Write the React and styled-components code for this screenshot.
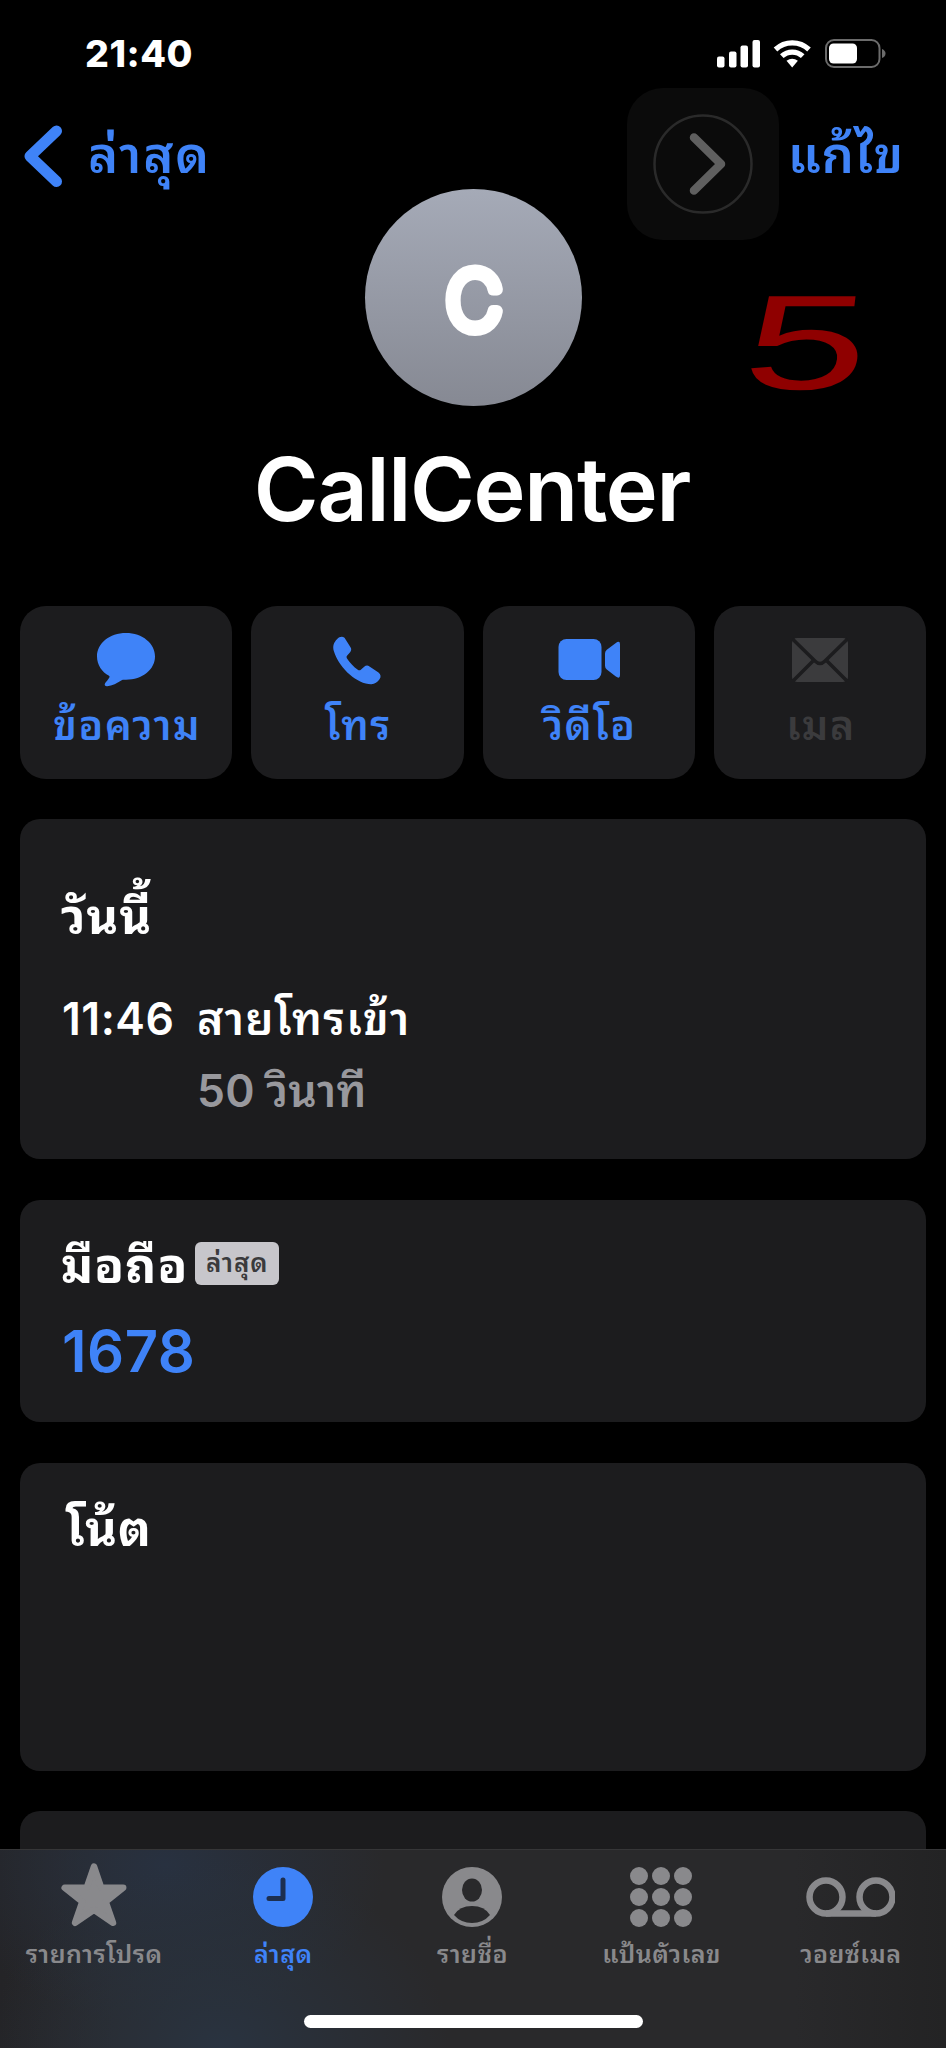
import React from "react";
import styled, {createGlobalStyle} from "styled-components";

const blue = '#3f83f8';
const card = '#1c1c1e';

const GlobalStyle = createGlobalStyle`
  * {
    box-sizing: border-box;
  }
  body {
    margin: 0;
    background: #000000;
    font-family: Inter, "Noto Sans Thai Looped", Loma, Garuda, "Noto Sans Thai", "Noto Sans", sans-serif;
    color: #FFFFFF;
  }
  svg {
    display: block;
    flex-shrink: 0;
  }
`;

const Screen = styled.div`
  position: relative;
  width: 946px;
  height: 2048px;
  overflow: hidden;
  display: flex;
  flex-direction: column;
  background: #000000;
  white-space: nowrap;
`;

const StatusBar = styled.div`
  height: 108px;
  padding: 0 60px 0 85px;
  display: flex;
  align-items: center;
  justify-content: space-between;
`;

const Time = styled.div`
  font-size: 37.5px;
  line-height: 44px;
  font-weight: 800;
  letter-spacing: .5px;
`;

const NavBar = styled.div`
  height: 81px;
  padding: 0 42px 0 24px;
  display: flex;
  justify-content: space-between;
`;

const BackLink = styled.div`
  display: flex;
  align-items: flex-start;
  padding-top: 17px;
`;

const NavText = styled.div`
  font-size: 51px;
  line-height: 60px;
  font-weight: 600;
  letter-spacing: ${props => props.$back ? '1.8px' : '.7px'};
  color: ${blue};
  margin-left: ${props => props.$back ? '25px' : '0'};
  padding-top: ${props => props.$back ? '0' : '17px'};
`;

const Profile = styled.div`
  display: flex;
  flex-direction: column;
  align-items: center;
  height: 417px;
`;

const Avatar = styled.div`
  width: 217px;
  height: 217px;
  border-radius: 50%;
  background: linear-gradient(#a5aab7, #868993);
`;

const Name = styled.div`
  margin: 29px 2px 0 0;
  font-size: 88px;
  line-height: 108px;
  font-weight: 600;
  letter-spacing: -1.3px;
`;

const Actions = styled.div`
  display: grid;
  grid-template-columns: repeat(4, 1fr);
  gap: 19px;
  margin: 0 20px;
`;

const Action = styled.div`
  height: 173px;
  border-radius: 26px;
  background: ${card};
  color: ${props => props.$disabled ? '#3b3b3d' : blue};
  display: flex;
  flex-direction: column;
  align-items: center;
  padding-top: 24px;
`;

const ActionLabel = styled.div`
  margin: 8px 0 0 2px;
  font-size: 41px;
  line-height: 50px;
  font-weight: 600;
  letter-spacing: 1.4px;
`;

const Card = styled.div`
  height: ${props => props.$height}px;
  margin: ${props => props.$gap}px 20px 0;
  padding: ${props => props.$top}px 41px 0;
  border-radius: 20px;
  background: ${card};
  flex-shrink: 0;
`;

const CardTitle = styled.div`
  margin-left: ${props => props.$indent || 0}px;
  font-size: 49px;
  line-height: 60px;
  font-weight: 700;
  letter-spacing: .8px;
`;

const CallRow = styled.div`
  display: grid;
  grid-template-columns: 135px auto;
  row-gap: 12px;
  margin: 42px 0 0 1px;
  font-size: 44.5px;
  line-height: 60px;
  font-weight: 600;
  letter-spacing: .5px;
`;

const CallType = styled.div`
  letter-spacing: 1.2px;
`;

const Duration = styled.div`
  grid-column: 2;
  color: #98989d;
  letter-spacing: .2px;
`;

const PhoneHead = styled.div`
  display: flex;
  align-items: center;
`;

const Badge = styled.div`
  width: 84px;
  height: 43px;
  margin: 0 0 6px 7px;
  border-radius: 6px;
  background: #c7c6cb;
  color: #3a3a3c;
  font-size: 26px;
  line-height: 41px;
  font-weight: 600;
  letter-spacing: .8px;
  text-align: center;
`;

const Phone = styled.div`
  margin: 20px 0 0 1px;
  font-size: 58px;
  line-height: 70px;
  font-weight: 600;
  letter-spacing: .5px;
  color: ${blue};
`;

const TabBar = styled.div`
  position: absolute;
  left: 0;
  right: 0;
  bottom: 0;
  height: 199px;
  border-top: 1px solid #363638;
  background:
    radial-gradient(ellipse 230px 190px at 220px 199px, #293340, transparent),
    radial-gradient(ellipse 220px 160px at 165px 15px, #283140, transparent),
    linear-gradient(90deg, #242427, #29292b 12%, #29292b 84%, #232324);
`;

const Tabs = styled.div`
  display: grid;
  grid-template-columns: repeat(5, 1fr);
  margin: 0 1px 0 -1px;
`;

const Tab = styled.div`
  display: flex;
  flex-direction: column;
  align-items: center;
  padding-top: 11px;
  color: ${props => props.$active ? blue : '#89898c'};
`;

const TabLabel = styled.div`
  margin: 4px 0 0 1px;
  font-size: 25px;
  line-height: 34px;
  font-weight: 600;
  letter-spacing: .5px;
`;

const HomeIndicator = styled.div`
  width: 339px;
  height: 13px;
  border-radius: 7px;
  background: #FFFFFF;
  margin: 44px auto 0;
`;

// AssistiveTouch button floating over the page
const Assistive = styled.div`
  position: absolute;
  left: 627px;
  top: 88px;
  width: 152px;
  height: 152px;
  border-radius: 36px;
  background: #0b0b0b;
`;

// step number written over the page
const StepMark = styled.div`
  position: absolute;
  left: 754px;
  top: 268px;
  font-family: "Liberation Sans", sans-serif;
  font-size: 135px;
  line-height: 150px;
  color: #8f0000;
  transform: scaleX(1.64) skewX(-4deg);
  transform-origin: 0 0;
`;

const StatusIcons = () => (
  <svg width="170" height="30" viewBox="0 0 170 30" fill="#fff">
    <rect x="1" y="17.500" width="7.500" height="11" rx="2"/>
    <rect x="13" y="12.500" width="7.500" height="16" rx="2"/>
    <rect x="24.500" y="6.500" width="7.500" height="22" rx="2"/>
    <rect x="36.500" y="1" width="7.500" height="27.500" rx="2"/>
    <g fill="none" stroke="#fff" strokeWidth="5.200">
      <path d="M59.500 10.500a24.300 24.300 0 0 1 33.500 0"/>
      <path d="M65.800 17.200a15.200 15.200 0 0 1 20.900 0"/>
    </g>
    <path d="M70.500 21.800q5.700-4.200 11.400 0L76.200 28.500z"/>
    <rect x="110" y="1" width="53.500" height="27" rx="8" fill="none" stroke="#6b6b6b" strokeWidth="2"/>
    <rect x="113" y="4.500" width="28" height="20" rx="4.500"/>
    <path d="M166 10q3.500 1.500 3.500 4.500T166 19z" fill="#6b6b6b"/>
  </svg>
);

const BackIcon = () => (
  <svg width="39" height="63" viewBox="0 0 39 63" fill="none" stroke={blue} strokeWidth="11" strokeLinecap="round" strokeLinejoin="round">
    <path d="M32.500 6L6 31.200l26.500 25.300"/>
  </svg>
);

const Monogram = () => (
  <svg width="217" height="217" viewBox="0 0 217 217">
    <text x="81" y="140" fontSize="79" fontWeight="200" textLength="56" lengthAdjust="spacingAndGlyphs" fill="#fff" stroke="#fff" strokeWidth="12" strokeLinejoin="round">C</text>
  </svg>
);

const MessageIcon = () => (
  <svg width="62" height="62" viewBox="0 0 62 62" fill="currentColor">
    <path d="M31 3C14.500 3 2 13.200 2 26.500c0 8.500 5 15.500 12 19.300.8.500.6 1.200.2 1.900-1 1.800-2.700 3.600-4 5.200-1.200 1.600-.2 3.500 2 3.300 5-.6 10-3 14.500-6 1-.7 2.500-.5 4.300-.5C47.500 49.700 60 39.500 60 26.500S47.500 3 31 3z"/>
  </svg>
);

const CallIcon = () => (
  <svg width="62" height="62" viewBox="1 0 62 62" fill="currentColor">
    <path d="M19.500 7.700c-2.400-1.600-5.300-.8-7.300 1.200-3.500 3.400-4.800 7.300-3.300 12.300C11.500 30 18 38.500 25 44.800c6 5.300 14.500 9.600 21.300 9.500 3.500-.1 6.200-2.300 8.200-5 1.800-2.500 1.300-5.100-1-6.900l-9-6c-2-1.300-3.700-1-5.300.4l-3.400 2.900c-1 .8-2 .7-3 0-4-2.800-8.300-7.500-10.800-11.300-.6-1-.6-1.900.2-2.800l2.900-3.300c1.300-1.600 1.500-3.200.4-5z"/>
  </svg>
);

const VideoIcon = () => (
  <svg width="62" height="62" viewBox="-.5 0 62 62" fill="currentColor">
    <rect x="0" y="9" width="43" height="41" rx="8"/>
    <path d="M46.500 23.500q0-2.200 1.800-3.700L57 13.200q4.500-3.200 4.500 1v31q0 4.300-4.500 1l-8.700-6.800q-1.800-1.400-1.800-3.700z"/>
  </svg>
);

const MailIcon = () => (
  <svg width="62" height="62" viewBox="0 0 62 62">
    <rect x="3" y="8" width="56" height="44" rx="5" fill="currentColor"/>
    <g fill="none" stroke={card} strokeWidth="3.500">
      <path d="M3.500 9L26 31q5 5 10 0L58.500 9"/>
      <path d="M4 51l20-20M58 51L38 31"/>
    </g>
  </svg>
);

const StarIcon = () => (
  <svg width="72" height="72" viewBox="0 0 72 72" fill="currentColor" stroke="currentColor" strokeWidth="6.500" strokeLinejoin="round">
    <path d="M36 5.500l7.200 21.200h22L47.700 40.700l7.300 21L36 48.700 17 61.700l7.300-21L6.700 26.700h22z"/>
  </svg>
);

const RecentIcon = () => (
  <svg width="72" height="72" viewBox="0 0 72 72">
    <circle cx="36" cy="36" r="30" fill="currentColor"/>
    <path d="M36 19v18.500H22" fill="none" stroke="#1d2f50" strokeWidth="5" strokeLinecap="round" strokeLinejoin="round"/>
  </svg>
);

const ContactIcon = () => (
  <svg width="72" height="72" viewBox="0 0 72 72">
    <circle cx="36" cy="36" r="30" fill="currentColor"/>
    <ellipse cx="36" cy="29" rx="10" ry="11.500" fill="#29292b"/>
    <path d="M18 54q5.500-9 18-9t18 9q-7 8-18 8t-18-8z" fill="#29292b"/>
  </svg>
);

const KeypadIcon = () => (
  <svg width="72" height="72" viewBox="0 0 72 72" fill="currentColor">
    {[15, 36, 57].map(y => [14, 36, 58].map(x => (
      <circle key={`${x}-${y}`} cx={x} cy={y} r="9"/>
    )))}
  </svg>
);

const VoicemailIcon = () => (
  <svg width="90" height="72" viewBox="-1 0 90 72" fill="none" stroke="currentColor" strokeWidth="6.500">
    <circle cx="20" cy="36" r="16.500"/>
    <circle cx="70" cy="36" r="16.500"/>
    <path d="M20 52.500h50"/>
  </svg>
);

const actions = [
  {label: 'ข้อความ', Icon: MessageIcon},
  {label: 'โทร', Icon: CallIcon},
  {label: 'วิดีโอ', Icon: VideoIcon},
  {label: 'เมล', Icon: MailIcon, disabled: true},
];

const tabs = [
  {label: 'รายการโปรด', Icon: StarIcon},
  {label: 'ล่าสุด', Icon: RecentIcon, active: true},
  {label: 'รายชื่อ', Icon: ContactIcon},
  {label: 'แป้นตัวเลข', Icon: KeypadIcon},
  {label: 'วอยซ์เมล', Icon: VoicemailIcon},
];

export default function App() {
  return (
    <Screen>
      <GlobalStyle/>
      <StatusBar>
        <Time>21:40</Time>
        <StatusIcons/>
      </StatusBar>
      <NavBar>
        <BackLink>
          <BackIcon/>
          <NavText $back>ล่าสุด</NavText>
        </BackLink>
        <NavText>แก้ไข</NavText>
      </NavBar>
      <Profile>
        <Avatar><Monogram/></Avatar>
        <Name>CallCenter</Name>
      </Profile>
      <Actions>
        {actions.map(({label, Icon, disabled}) => (
          <Action key={label} $disabled={disabled}>
            <Icon/>
            <ActionLabel>{label}</ActionLabel>
          </Action>
        ))}
      </Actions>
      <Card $height={340} $gap={40} $top={68}>
        <CardTitle>วันนี้</CardTitle>
        <CallRow>
          <div>11:46</div>
          <CallType>สายโทรเข้า</CallType>
          <Duration>50 วินาที</Duration>
        </CallRow>
      </Card>
      <Card $height={222} $gap={41} $top={36}>
        <PhoneHead>
          <CardTitle>มือถือ</CardTitle>
          <Badge>ล่าสุด</Badge>
        </PhoneHead>
        <Phone>1678</Phone>
      </Card>
      <Card $height={308} $gap={41} $top={36}>
        <CardTitle $indent={5}>โน้ต</CardTitle>
      </Card>
      <Card $height={200} $gap={40} $top={0}/>
      <TabBar>
        <Tabs>
          {tabs.map(({label, Icon, active}) => (
            <Tab key={label} $active={active}>
              <Icon/>
              <TabLabel>{label}</TabLabel>
            </Tab>
          ))}
        </Tabs>
        <HomeIndicator/>
      </TabBar>
      <Assistive>
        <svg width="152" height="152" viewBox="0 0 152 152" fill="none">
          <circle cx="76" cy="76" r="48.500" stroke="#2a2a2a" strokeWidth="2.500"/>
          <path d="M67 49.500L94 76l-27 26.500" stroke="#5f5f5f" strokeWidth="8.500" strokeLinecap="round" strokeLinejoin="round"/>
        </svg>
      </Assistive>
      <StepMark>5</StepMark>
    </Screen>
  );
}
